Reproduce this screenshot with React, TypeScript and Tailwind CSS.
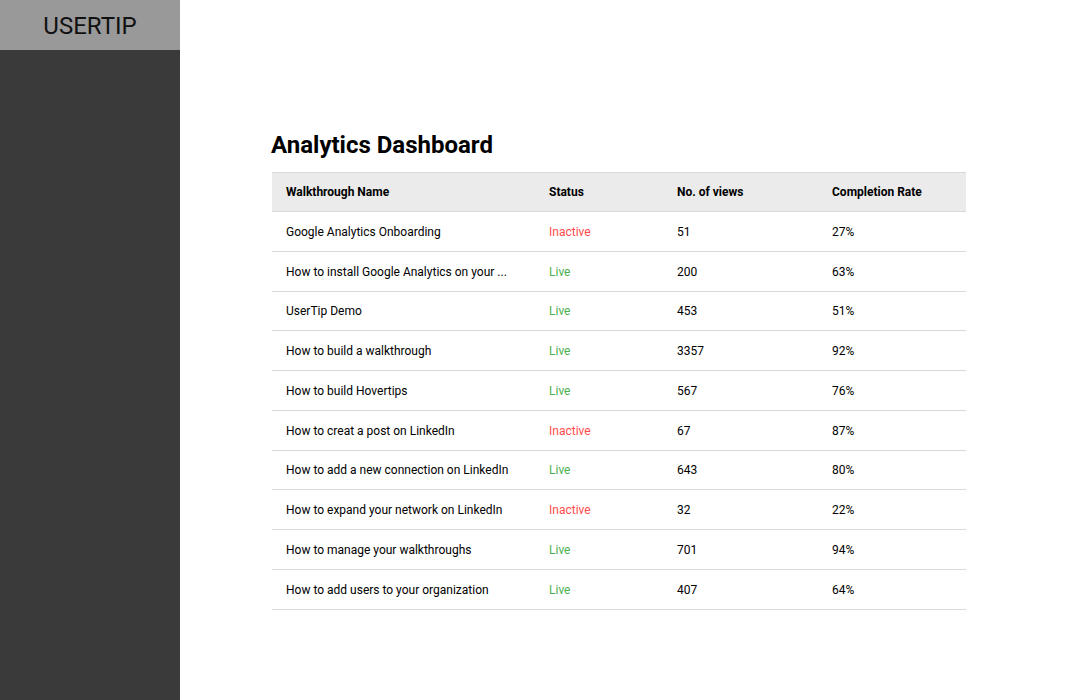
import React from "react";

const rows: [string, boolean, string, string][] = [
  ["Google Analytics Onboarding", false, "51", "27%"],
  ["How to install Google Analytics on your ...", true, "200", "63%"],
  ["UserTip Demo", true, "453", "51%"],
  ["How to build a walkthrough", true, "3357", "92%"],
  ["How to build Hovertips", true, "567", "76%"],
  ["How to creat a post on LinkedIn", false, "67", "87%"],
  ["How to add a new connection on LinkedIn", true, "643", "80%"],
  ["How to expand your network on LinkedIn", false, "32", "22%"],
  ["How to manage your walkthroughs", true, "701", "94%"],
  ["How to add users to your organization", true, "407", "64%"],
];

export default function App() {
  return (
    <div
      className="flex h-[700px] w-full bg-white text-black"
      style={{ fontFamily: "Roboto, 'Liberation Sans', sans-serif" }}
    >
      <aside className="flex w-[180px] shrink-0 flex-col bg-[#3a3a3a]">
        <div className="flex h-[50px] items-center justify-center bg-[#999999] pt-[2px] text-[24px] text-[#111]">
          USERTIP
        </div>
      </aside>
      <main className="flex-1 pl-[92px] pt-[131px]">
        <h1 className="mb-[13px] h-[28px] text-[24px] font-bold leading-[28px] -ml-px">
          Analytics Dashboard
        </h1>
        <div className="w-[694px] text-[12px]">
          <div className="flex h-[40px] items-center border-y border-[#d9d9d9] bg-[#ebebeb] font-bold">
            <div className="w-[263px] pl-[14px]">Walkthrough Name</div>
            <div className="w-[128px] pl-[14px]">Status</div>
            <div className="w-[155px] pl-[14px]">No. of views</div>
            <div className="pl-[14px]">Completion Rate</div>
          </div>
          {rows.map(([name, live, views, rate]) => (
            <div
              key={name}
              className="flex h-[39.75px] items-center border-b border-[#d9d9d9] pt-px"
            >
              <div className="w-[263px] pl-[14px]">{name}</div>
              <div
                className={
                  "w-[128px] pl-[14px] " +
                  (live ? "text-[#4caf50]" : "text-[#ff4c4c]")
                }
              >
                {live ? "Live" : "Inactive"}
              </div>
              <div className="w-[155px] pl-[14px]">{views}</div>
              <div className="pl-[14px]">{rate}</div>
            </div>
          ))}
        </div>
      </main>
    </div>
  );
}
